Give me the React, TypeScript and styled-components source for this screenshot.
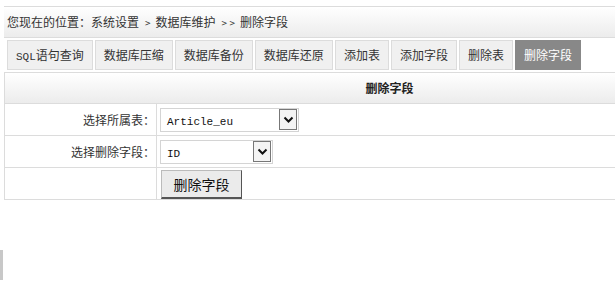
import React from "react";
import styled, { createGlobalStyle } from "styled-components";

const Global = createGlobalStyle`
  html, body { margin: 0; padding: 0; overflow: hidden; background: #fff; }
  body { font-family: "Noto Sans CJK SC", "Noto Sans", sans-serif; font-size: 12px; color: #222; }
`;

const Page = styled.div`
  width: 770px;
  padding: 6px 0 0 4px;
`;

const Crumb = styled.div`
  height: 30px;
  line-height: 30px;
  border-top: 1px solid #dcdcdc;
  border-bottom: 1px solid #dcdcdc;
  background: linear-gradient(#ffffff, #ececec);
  padding-left: 3px;
  font-size: 12px;
  color: #333;
`;

const Sep = styled.span`
  font-size: 10px;
  margin: 0 5px 0 6px;
  white-space: pre;
`;

const TabBar = styled.div`
  display: flex;
  gap: 2px;
  padding: 2px 0 2px 3px;
  border-bottom: 1px solid #dcdcdc;
`;

const Tab = styled.div<{ $active?: boolean }>`
  height: 28px;
  line-height: 28px;
  padding: 0 8px;
  border: 1px solid ${(p) => (p.$active ? "#888" : "#dcdcdc")};
  background: ${(p) => (p.$active ? "#888888" : "#f0f0f0")};
  color: ${(p) => (p.$active ? "#fff" : "#333")};
  font-size: 12px;
  white-space: nowrap;
`;

const Mono = styled.span`
  font-family: "Liberation Mono", monospace;
  font-size: 11px;
`;

const Table = styled.div`
  border-left: 1px solid #dcdcdc;
`;

const Head = styled.div`
  height: 30px;
  line-height: 30px;
  text-align: center;
  font-weight: bold;
  background: linear-gradient(#ffffff, #ececec);
  border-bottom: 1px solid #dcdcdc;
  font-size: 12px;
  color: #222;
`;

const Row = styled.div`
  display: grid;
  grid-template-columns: 152px 1fr;
  height: 31px;
  border-bottom: 1px solid #dcdcdc;
`;

const Label = styled.div`
  border-right: 1px solid #dcdcdc;
  text-align: right;
  padding-right: 1px;
  line-height: 31px;
  font-size: 12px;
  color: #333;
`;

const Cell = styled.div`
  display: flex;
  align-items: center;
  padding-left: 3px;
`;

const Select = styled.div<{ $w: number }>`
  width: ${(p) => p.$w}px;
  height: 22px;
  border: 1px solid #d4d4d4;
  display: flex;
  align-items: center;
  justify-content: space-between;
  box-sizing: content-box;
  background: #fff;
`;

const SelText = styled.span`
  font-family: "Liberation Mono", monospace;
  font-size: 11px;
  color: #111;
  padding: 5px 0 0 6px;
`;

const Arrow = styled.span`
  width: 16px;
  height: 19px;
  border: 1px solid #777;
  background: #f4f4f4;
  margin-right: 1px;
  display: flex;
  align-items: center;
  justify-content: center;
`;

const Button = styled.div`
  width: 79px;
  height: 26px;
  line-height: 26px;
  text-align: center;
  background: #ebebeb;
  border: 1px solid #bbb;
  border-right-color: #555;
  border-bottom: 2px solid #555;
  font-size: 14px;
  color: #111;
  margin: 1px 0 0 1px;
`;

const EdgeMark = styled.div`
  position: absolute;
  left: 0;
  top: 250px;
  width: 3px;
  height: 30px;
  background: #c8c8c8;
`;

const Chevron = () => (
  <svg width="11" height="8" viewBox="0 0 11 8">
    <path d="M1.5 1.5 L5.5 5.5 L9.5 1.5" fill="none" stroke="#111" strokeWidth="2" />
  </svg>
);

export default function App() {
  const tabs = ["数据库压缩", "数据库备份", "数据库还原", "添加表", "添加字段", "删除表"];
  return (
    <>
      <Global />
      <Page>
        <Crumb>
          您现在的位置：系统设置<Sep>&gt;</Sep>数据库维护<Sep>&gt; &gt;</Sep>删除字段
        </Crumb>
        <TabBar>
          <Tab>
            <Mono>SQL</Mono>语句查询
          </Tab>
          {tabs.map((t) => (
            <Tab key={t}>{t}</Tab>
          ))}
          <Tab $active>删除字段</Tab>
        </TabBar>
        <Table>
          <Head>删除字段</Head>
          <Row>
            <Label>选择所属表：</Label>
            <Cell>
              <Select $w={137}>
                <SelText>Article_eu</SelText>
                <Arrow>
                  <Chevron />
                </Arrow>
              </Select>
            </Cell>
          </Row>
          <Row>
            <Label>选择删除字段：</Label>
            <Cell>
              <Select $w={111}>
                <SelText>ID</SelText>
                <Arrow>
                  <Chevron />
                </Arrow>
              </Select>
            </Cell>
          </Row>
          <Row>
            <Label />
            <Cell>
              <Button>删除字段</Button>
            </Cell>
          </Row>
        </Table>
      </Page>
      <EdgeMark />
    </>
  );
}
